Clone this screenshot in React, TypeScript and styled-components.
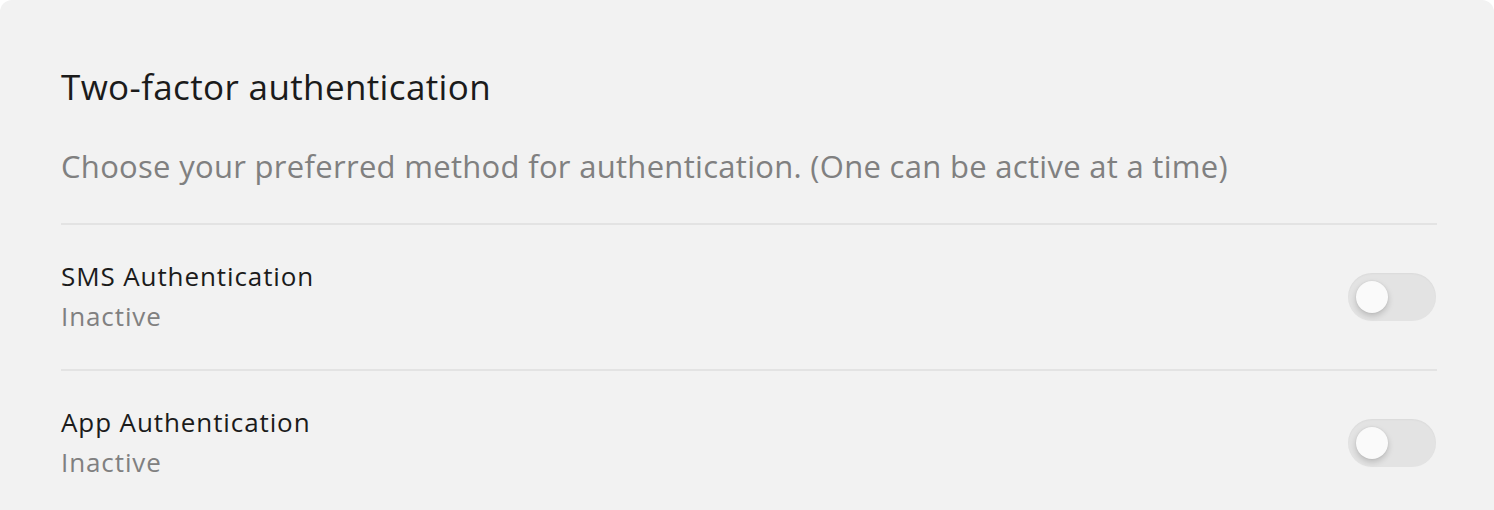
import React from "react";
import styled, { createGlobalStyle } from "styled-components";

const Global = createGlobalStyle`
  html, body { margin: 0; padding: 0; background: #ffffff; }
  body { font-family: "Open Sans", Lato, sans-serif; }
`;

const Card = styled.section`
  background: #f2f2f2;
  border-radius: 12px 12px 0 0;
  padding: 66px 57px 0 61px;
  min-height: 510px;
  box-sizing: border-box;
`;

const Title = styled.h2`
  margin: 0;
  font-size: 35px;
  line-height: 42px;
  font-weight: 400;
  letter-spacing: 0.36px;
  color: #1b1b1b;
`;

const Subtitle = styled.p`
  margin: 39px 0 0;
  font-size: 31px;
  line-height: 38px;
  letter-spacing: 0.3px;
  color: #808080;
`;

const Divider = styled.hr`
  border: 0;
  height: 2px;
  background: #e3e3e3;
  margin: 0;
`;

const List = styled.div`
  margin-top: 38px;
  display: flex;
  flex-direction: column;
`;

const Row = styled.div`
  display: flex;
  align-items: center;
  justify-content: space-between;
  padding: 36px 0 37px;
`;

const Info = styled.div`
  display: flex;
  flex-direction: column;
  gap: 9px;
`;

const RowTitle = styled.span`
  font-size: 26px;
  line-height: 31px;
  letter-spacing: 0.9px;
  color: #1b1b1b;
`;

const Status = styled.span`
  font-size: 26px;
  line-height: 31px;
  letter-spacing: 0.9px;
  color: #808080;
`;

const Track = styled.button<{ $on: boolean }>`
  position: relative;
  width: 88px;
  height: 48px;
  border: 0;
  padding: 0;
  border-radius: 24px;
  background: ${(p) => (p.$on ? "#4caf50" : "#e3e3e3")};
  box-shadow: inset 0 1px 2px rgba(0, 0, 0, 0.04);
  cursor: pointer;
  margin-right: 1px;
`;

const Knob = styled.span<{ $on: boolean }>`
  position: absolute;
  top: 8px;
  left: ${(p) => (p.$on ? "48px" : "8px")};
  width: 32px;
  height: 32px;
  border-radius: 50%;
  background: #fafafa;
  box-shadow: 0 3px 6px rgba(0, 0, 0, 0.18), 0 0 2px rgba(0, 0, 0, 0.08);
`;

const methods = [
  { name: "SMS Authentication", active: false },
  { name: "App Authentication", active: false },
];

export default function App() {
  return (
    <>
      <Global />
      <Card>
        <Title>Two-factor authentication</Title>
        <Subtitle>
          Choose your preferred method for authentication. (One can be active at a time)
        </Subtitle>
        <List>
          {methods.map((m) => (
            <React.Fragment key={m.name}>
              <Divider />
              <Row>
                <Info>
                  <RowTitle>{m.name}</RowTitle>
                  <Status>{m.active ? "Active" : "Inactive"}</Status>
                </Info>
                <Track $on={m.active} aria-label={m.name}>
                  <Knob $on={m.active} />
                </Track>
              </Row>
            </React.Fragment>
          ))}
        </List>
      </Card>
    </>
  );
}
